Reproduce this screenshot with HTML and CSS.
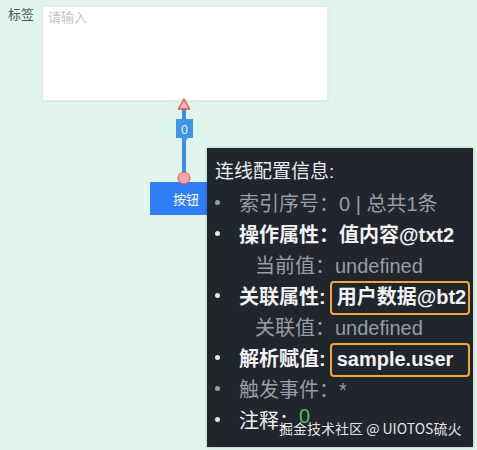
FILE: index.html
```html
<!DOCTYPE html>
<html lang="zh">
<head>
<meta charset="utf-8">
<title>连线配置信息</title>
<link rel="stylesheet" href="styles.css">
</head>
<body>
<div class="stage">
  <div class="form-row">
    <label class="form-label">标签</label>
    <textarea class="form-input" placeholder="请输入"></textarea>
  </div>

  <div class="connector">
    <svg width="24" height="90" viewBox="0 0 24 90">
      <line x1="12" y1="6" x2="12" y2="80" stroke="#3a8ee6" stroke-width="4"/>
      <polygon points="12,1 17.5,11 6.5,11" fill="#f4b7b7" stroke="#e0555a" stroke-width="1.5" stroke-linejoin="round"/>
      <rect x="4" y="21" width="17" height="19" fill="#3f95ea"/>
      <polygon points="10,40 16,40 13,44" fill="#3f95ea"/>
      <text x="12.5" y="35.5" text-anchor="middle" class="conn-label">0</text>
      <circle cx="12" cy="80" r="6" fill="#f3a6a6" stroke="#e0555a" stroke-width="1"/>
    </svg>
  </div>

  <button class="btn">按钮</button>

  <div class="tip">
    <div class="tip-title">连线配置信息:</div>
    <div class="row dim"><span class="dot"></span>索引序号：0 | 总共1条</div>
    <div class="row strong"><span class="dot"></span>操作属性：值内容@txt2</div>
    <div class="sub dim">当前值：undefined</div>
    <div class="row strong"><span class="dot"></span>关联属性:<span class="hl">用户数据@bt2</span></div>
    <div class="sub dim">关联值：undefined</div>
    <div class="row strong"><span class="dot"></span>解析赋值:<span class="hl">sample.user</span></div>
    <div class="row dim"><span class="dot"></span>触发事件：*</div>
    <div class="row plain"><span class="dot"></span>注释：<span class="green">0</span></div>
  </div>

  <div class="watermark">掘金技术社区 @ UIOTOS硫火</div>
</div>
</body>
</html>
```

FILE: styles.css
```css
html, body {
  margin: 0;
  padding: 0;
  background: #e2f5ec;
}
.stage {
  position: relative;
  width: 477px;
  height: 450px;
  overflow: hidden;
  font-family: "Noto Sans CJK SC", "Noto Sans", sans-serif;
}
.form-row {
  display: flex;
  align-items: flex-start;
  padding: 5px 0 0 8px;
}
.form-label {
  width: 34px;
  font-size: 13px;
  line-height: 18px;
  color: #555;
}
.form-input {
  width: 286px;
  height: 95px;
  box-sizing: border-box;
  margin: 1px 0 0 0;
  border: 1px solid #e6ebe8;
  background: #fff;
  resize: none;
  padding: 1px 5px;
  font-family: "Noto Sans CJK SC", sans-serif;
  font-size: 13px;
  line-height: 18px;
  box-shadow: 0 1px 2px rgba(0,0,0,0.06);
}
.form-input::placeholder {
  color: #c3c3c3;
}
.connector {
  position: absolute;
  left: 172px;
  top: 98px;
  width: 24px;
  height: 90px;
}
.connector svg {
  display: block;
}
.conn-label {
  font-family: "Noto Sans", sans-serif;
  font-size: 12px;
  fill: #eaf3ff;
}
.btn {
  display: block;
  margin: 81px 0 0 150px;
  width: 72px;
  height: 33px;
  border: none;
  border-radius: 0;
  background: #2f7ef6;
  color: #fff;
  font-family: "Noto Sans CJK SC", sans-serif;
  font-size: 13px;
  padding: 0;
}
.tip {
  position: absolute;
  left: 207px;
  top: 148px;
  width: 266px;
  height: 299px;
  box-sizing: border-box;
  padding: 8px 0 0 8px;
  background: #21252d;
  box-shadow: 0 0 3px rgba(0,0,0,0.25);
  color: #e6e6e6;
  font-family: "Liberation Sans", "Noto Sans CJK SC", sans-serif;
}
.tip-title {
  font-size: 19px;
  line-height: 31px;
  height: 31px;
  color: #ececec;
}
.row, .sub {
  display: flex;
  align-items: center;
  height: 31px;
  font-size: 20px;
  white-space: pre;
}
.sub {
  padding-left: 40px;
}
.dot {
  width: 5px;
  height: 5px;
  border-radius: 50%;
  background: currentColor;
  margin: 0 19px 0 0;
  flex: none;
}
.dim {
  color: #9a9da4;
}
.strong {
  color: #f2f2f2;
  font-weight: bold;
}
.plain {
  color: #f0f0f0;
}
.row.strong .dot, .row.plain .dot {
  background: #e6e6e6;
}
.hl {
  display: inline-block;
  box-sizing: border-box;
  width: 140px;
  height: 34px;
  line-height: 29px;
  margin: 5px 0 0 4px;
  padding: 0 5px;
  border: 2px solid #f2aa35;
  border-radius: 4px;
}
.green {
  color: #5cbf5c;
  font-weight: normal;
  position: relative;
  top: -3px;
}
.watermark {
  position: absolute;
  left: 279px;
  top: 418px;
  font-size: 14px;
  line-height: 20px;
  color: rgba(255,255,255,0.9);
  white-space: nowrap;
}
```
